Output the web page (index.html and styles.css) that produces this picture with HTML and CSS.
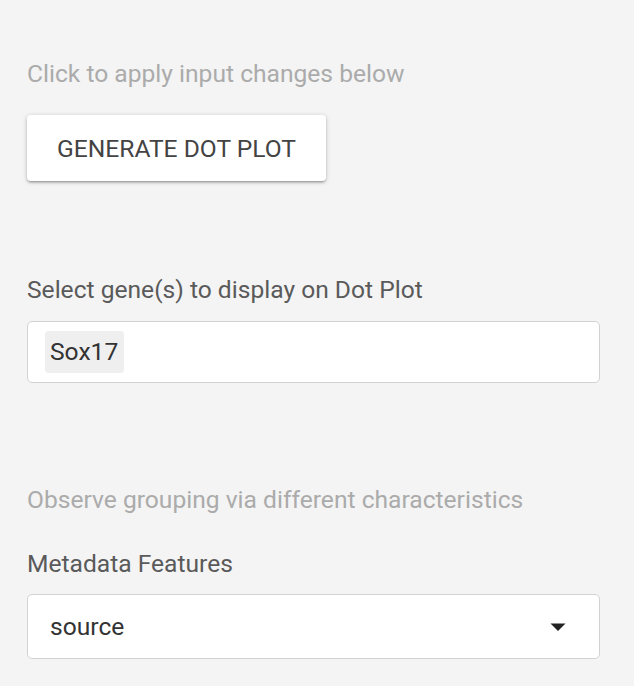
FILE: index.html
```html
<!DOCTYPE html>
<html>
<head>
<meta charset="utf-8">
<link rel="stylesheet" href="styles.css">
</head>
<body>
<div class="panel">
  <p class="hint hint-first">Click to apply input changes below</p>
  <button class="btn">GENERATE DOT PLOT</button>
  <label class="label label-genes">Select gene(s) to display on Dot Plot</label>
  <div class="field multi">
    <span class="chip">Sox17</span>
  </div>
  <p class="hint hint-second">Observe grouping via different characteristics</p>
  <label class="label label-meta">Metadata Features</label>
  <div class="field select">
    <span class="value">source</span>
    <svg class="caret" width="16" height="8" viewBox="0 0 16 8"><path d="M0.5 0.5 L15.5 0.5 L8 8 Z" fill="#222"/></svg>
  </div>
</div>
</body>
</html>
```
FILE: styles.css
```css
html, body {
  margin: 0;
  padding: 0;
  background: #f4f4f4;
  font-family: Roboto, "Liberation Sans", sans-serif;
}
.panel {
  padding: 0 34px 0 27px;
  display: flex;
  flex-direction: column;
  align-items: flex-start;
}
.hint {
  margin: 0;
  font-size: 24.6px;
  line-height: 30px;
  color: #ababab;
}
.hint-first { margin-top: 59px; }
.btn {
  margin-top: 26px;
  width: 299px;
  height: 66px;
  border: none;
  border-radius: 4px;
  background: #ffffff;
  color: #434343;
  font-family: Roboto, "Liberation Sans", sans-serif;
  font-size: 24.6px;
  padding: 0;
  box-shadow: 0 2px 2px 0 rgba(0,0,0,0.14), 0 3px 1px -2px rgba(0,0,0,0.12), 0 1px 5px 0 rgba(0,0,0,0.2);
}
.label {
  font-size: 24.6px;
  line-height: 30px;
  color: #5a5a5a;
}
.label-genes { margin-top: 94px; }
.field {
  align-self: stretch;
  box-sizing: border-box;
  background: #ffffff;
  border: 1px solid #d2d2d2;
  border-radius: 5px;
  display: flex;
  align-items: center;
}
.multi {
  margin-top: 16px;
  height: 62px;
  padding: 0 17px;
}
.chip {
  background: #efefef;
  border-radius: 4px;
  height: 42px;
  line-height: 42px;
  padding: 0 6px 0 5px;
  font-size: 24.6px;
  color: #333333;
}
.hint-second { margin-top: 102px; }
.label-meta { margin-top: 34px; }
.select {
  margin-top: 15px;
  height: 65px;
  padding: 0 33px 0 22px;
  justify-content: space-between;
}
.value {
  font-size: 24.6px;
  color: #333333;
}
.caret { display: block; }
```
